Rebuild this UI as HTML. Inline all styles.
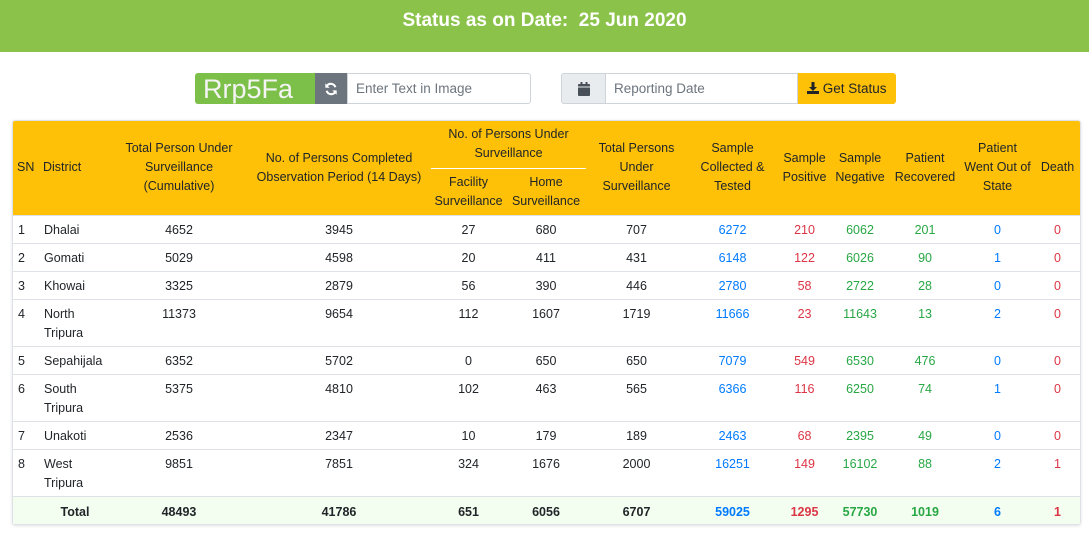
<!DOCTYPE html>
<html><head><meta charset="utf-8"><style>
*{box-sizing:border-box}
body{margin:0;width:1089px;height:554px;background:#fff;font-family:"Liberation Sans",Arial,sans-serif;color:#212529;overflow:hidden}
.top{height:52px;background:#8bc34a;color:#fff;font-weight:bold;font-size:19px;text-align:center;line-height:42px}
.bar{position:absolute;top:73px;height:31px;display:flex}
.cap{width:120px;height:31px;background:#7cc04a;color:#f4f4f4;font-size:27px;line-height:33px;padding-left:8px;letter-spacing:0px;border-radius:3px 0 0 3px}
.ref{width:32px;background:#6c757d;color:#fff;display:flex;align-items:center;justify-content:center}
.inp{border:1px solid #ced4da;color:#6c757d;font-size:13.5px;line-height:29px;padding-left:8px}
.cal{width:45px;background:#e9ecef;border:1px solid #ced4da;border-radius:3px 0 0 3px;display:flex;align-items:center;justify-content:center}
.btn{background:#ffc107;color:#212529;font-size:13.5px;line-height:31px;padding:0 9px;border-radius:0 3px 3px 0}
.wrap{position:absolute;left:12px;top:120px;width:1069px;border:1px solid #dee2e6;border-radius:3px;box-shadow:0 1px 3px rgba(0,0,0,.12);overflow:hidden}
table{border-collapse:collapse;table-layout:fixed;width:1068px;font-size:12.5px}
th{background:#ffc107;font-weight:normal;padding:0 3px;line-height:19px;text-align:center}
td{padding:0 5px;text-align:center;line-height:19px;vertical-align:top;padding-top:5px;border-top:1px solid #dee2e6}
td.l{text-align:left}
.b{color:#007bff}.r{color:#dc3545}.g{color:#28a745}
tr.h1 td{height:28px}tr.h2 td{height:47px}
tr.tot td{background:#f3fdf0;font-weight:bold;height:28px;padding-top:6px}
</style></head><body>
<div class="top">Status as on Date:&nbsp; 25 Jun 2020</div>
<div class="bar" style="left:195px">
<div class="cap">Rrp5Fa</div>
<div class="ref"><svg width="14" height="14" viewBox="0 0 16 16"><path d="M13 6A5.5 5.5 0 0 0 3.2 4.5M3 10a5.5 5.5 0 0 0 9.8 1.5" stroke="#fff" stroke-width="2.4" fill="none"/><path d="M1.5 1.5v5h5zM14.5 14.5v-5h-5z" fill="#fff"/></svg></div>
<div class="inp" style="width:184px;border-radius:0 3px 3px 0">Enter Text in Image</div>
</div>
<div class="bar" style="left:561px">
<div class="cal"><svg width="12" height="14" viewBox="0 0 12 14"><rect x="0" y="2" width="12" height="12" rx="1" fill="#495057"/><rect x="2.5" y="0" width="2" height="4" fill="#495057"/><rect x="7.5" y="0" width="2" height="4" fill="#495057"/><rect x="0" y="4.5" width="12" height="1" fill="#e9ecef"/></svg></div>
<div class="inp" style="width:192px;border-left:none">Reporting Date</div>
<div class="btn"><svg width="12" height="12" viewBox="0 0 12 12" style="vertical-align:-1px"><path d="M4.5 0h3v5h2.5L6 9 2 5h2.5z" fill="#212529"/><rect x="0" y="9" width="12" height="3" fill="#212529"/></svg> Get Status</div>
</div>
<div class="wrap"><table>
<colgroup><col style="width:26px"><col style="width:72px"><col style="width:136px"><col style="width:184px"><col style="width:75px"><col style="width:80px"><col style="width:101px"><col style="width:91px"><col style="width:53px"><col style="width:58px"><col style="width:72px"><col style="width:73px"><col style="width:47px"></colgroup>
<tr style="height:47px"><th rowspan="2" style="text-align:left;padding-left:4px">SN</th><th rowspan="2" style="text-align:left;padding-left:4px">District</th><th rowspan="2">Total Person Under Surveillance (Cumulative)</th><th rowspan="2">No. of Persons Completed Observation Period (14 Days)</th><th colspan="2" style="vertical-align:middle;padding-top:0;border-bottom:1px solid #fff">No. of Persons Under Surveillance</th><th rowspan="2">Total Persons Under Surveillance</th><th rowspan="2">Sample Collected &amp; Tested</th><th rowspan="2">Sample Positive</th><th rowspan="2">Sample Negative</th><th rowspan="2">Patient Recovered</th><th rowspan="2">Patient Went Out of State</th><th rowspan="2">Death</th></tr>
<tr style="height:47px"><th>Facility Surveillance</th><th>Home Surveillance</th></tr>
<tr class="h1"><td class="l">1</td><td class="l">Dhalai</td><td>4652</td><td>3945</td><td>27</td><td>680</td><td>707</td><td class="b">6272</td><td class="r">210</td><td class="g">6062</td><td class="g">201</td><td class="b">0</td><td class="r">0</td></tr>
<tr class="h1"><td class="l">2</td><td class="l">Gomati</td><td>5029</td><td>4598</td><td>20</td><td>411</td><td>431</td><td class="b">6148</td><td class="r">122</td><td class="g">6026</td><td class="g">90</td><td class="b">1</td><td class="r">0</td></tr>
<tr class="h1"><td class="l">3</td><td class="l">Khowai</td><td>3325</td><td>2879</td><td>56</td><td>390</td><td>446</td><td class="b">2780</td><td class="r">58</td><td class="g">2722</td><td class="g">28</td><td class="b">0</td><td class="r">0</td></tr>
<tr class="h2"><td class="l">4</td><td class="l">North Tripura</td><td>11373</td><td>9654</td><td>112</td><td>1607</td><td>1719</td><td class="b">11666</td><td class="r">23</td><td class="g">11643</td><td class="g">13</td><td class="b">2</td><td class="r">0</td></tr>
<tr class="h1"><td class="l">5</td><td class="l">Sepahijala</td><td>6352</td><td>5702</td><td>0</td><td>650</td><td>650</td><td class="b">7079</td><td class="r">549</td><td class="g">6530</td><td class="g">476</td><td class="b">0</td><td class="r">0</td></tr>
<tr class="h2"><td class="l">6</td><td class="l">South Tripura</td><td>5375</td><td>4810</td><td>102</td><td>463</td><td>565</td><td class="b">6366</td><td class="r">116</td><td class="g">6250</td><td class="g">74</td><td class="b">1</td><td class="r">0</td></tr>
<tr class="h1"><td class="l">7</td><td class="l">Unakoti</td><td>2536</td><td>2347</td><td>10</td><td>179</td><td>189</td><td class="b">2463</td><td class="r">68</td><td class="g">2395</td><td class="g">49</td><td class="b">0</td><td class="r">0</td></tr>
<tr class="h2"><td class="l">8</td><td class="l">West Tripura</td><td>9851</td><td>7851</td><td>324</td><td>1676</td><td>2000</td><td class="b">16251</td><td class="r">149</td><td class="g">16102</td><td class="g">88</td><td class="b">2</td><td class="r">1</td></tr>
<tr class="tot"><td></td><td>Total</td><td>48493</td><td>41786</td><td>651</td><td>6056</td><td>6707</td><td class="b">59025</td><td class="r">1295</td><td class="g">57730</td><td class="g">1019</td><td class="b">6</td><td class="r">1</td></tr>
</table></div>
</body></html>
